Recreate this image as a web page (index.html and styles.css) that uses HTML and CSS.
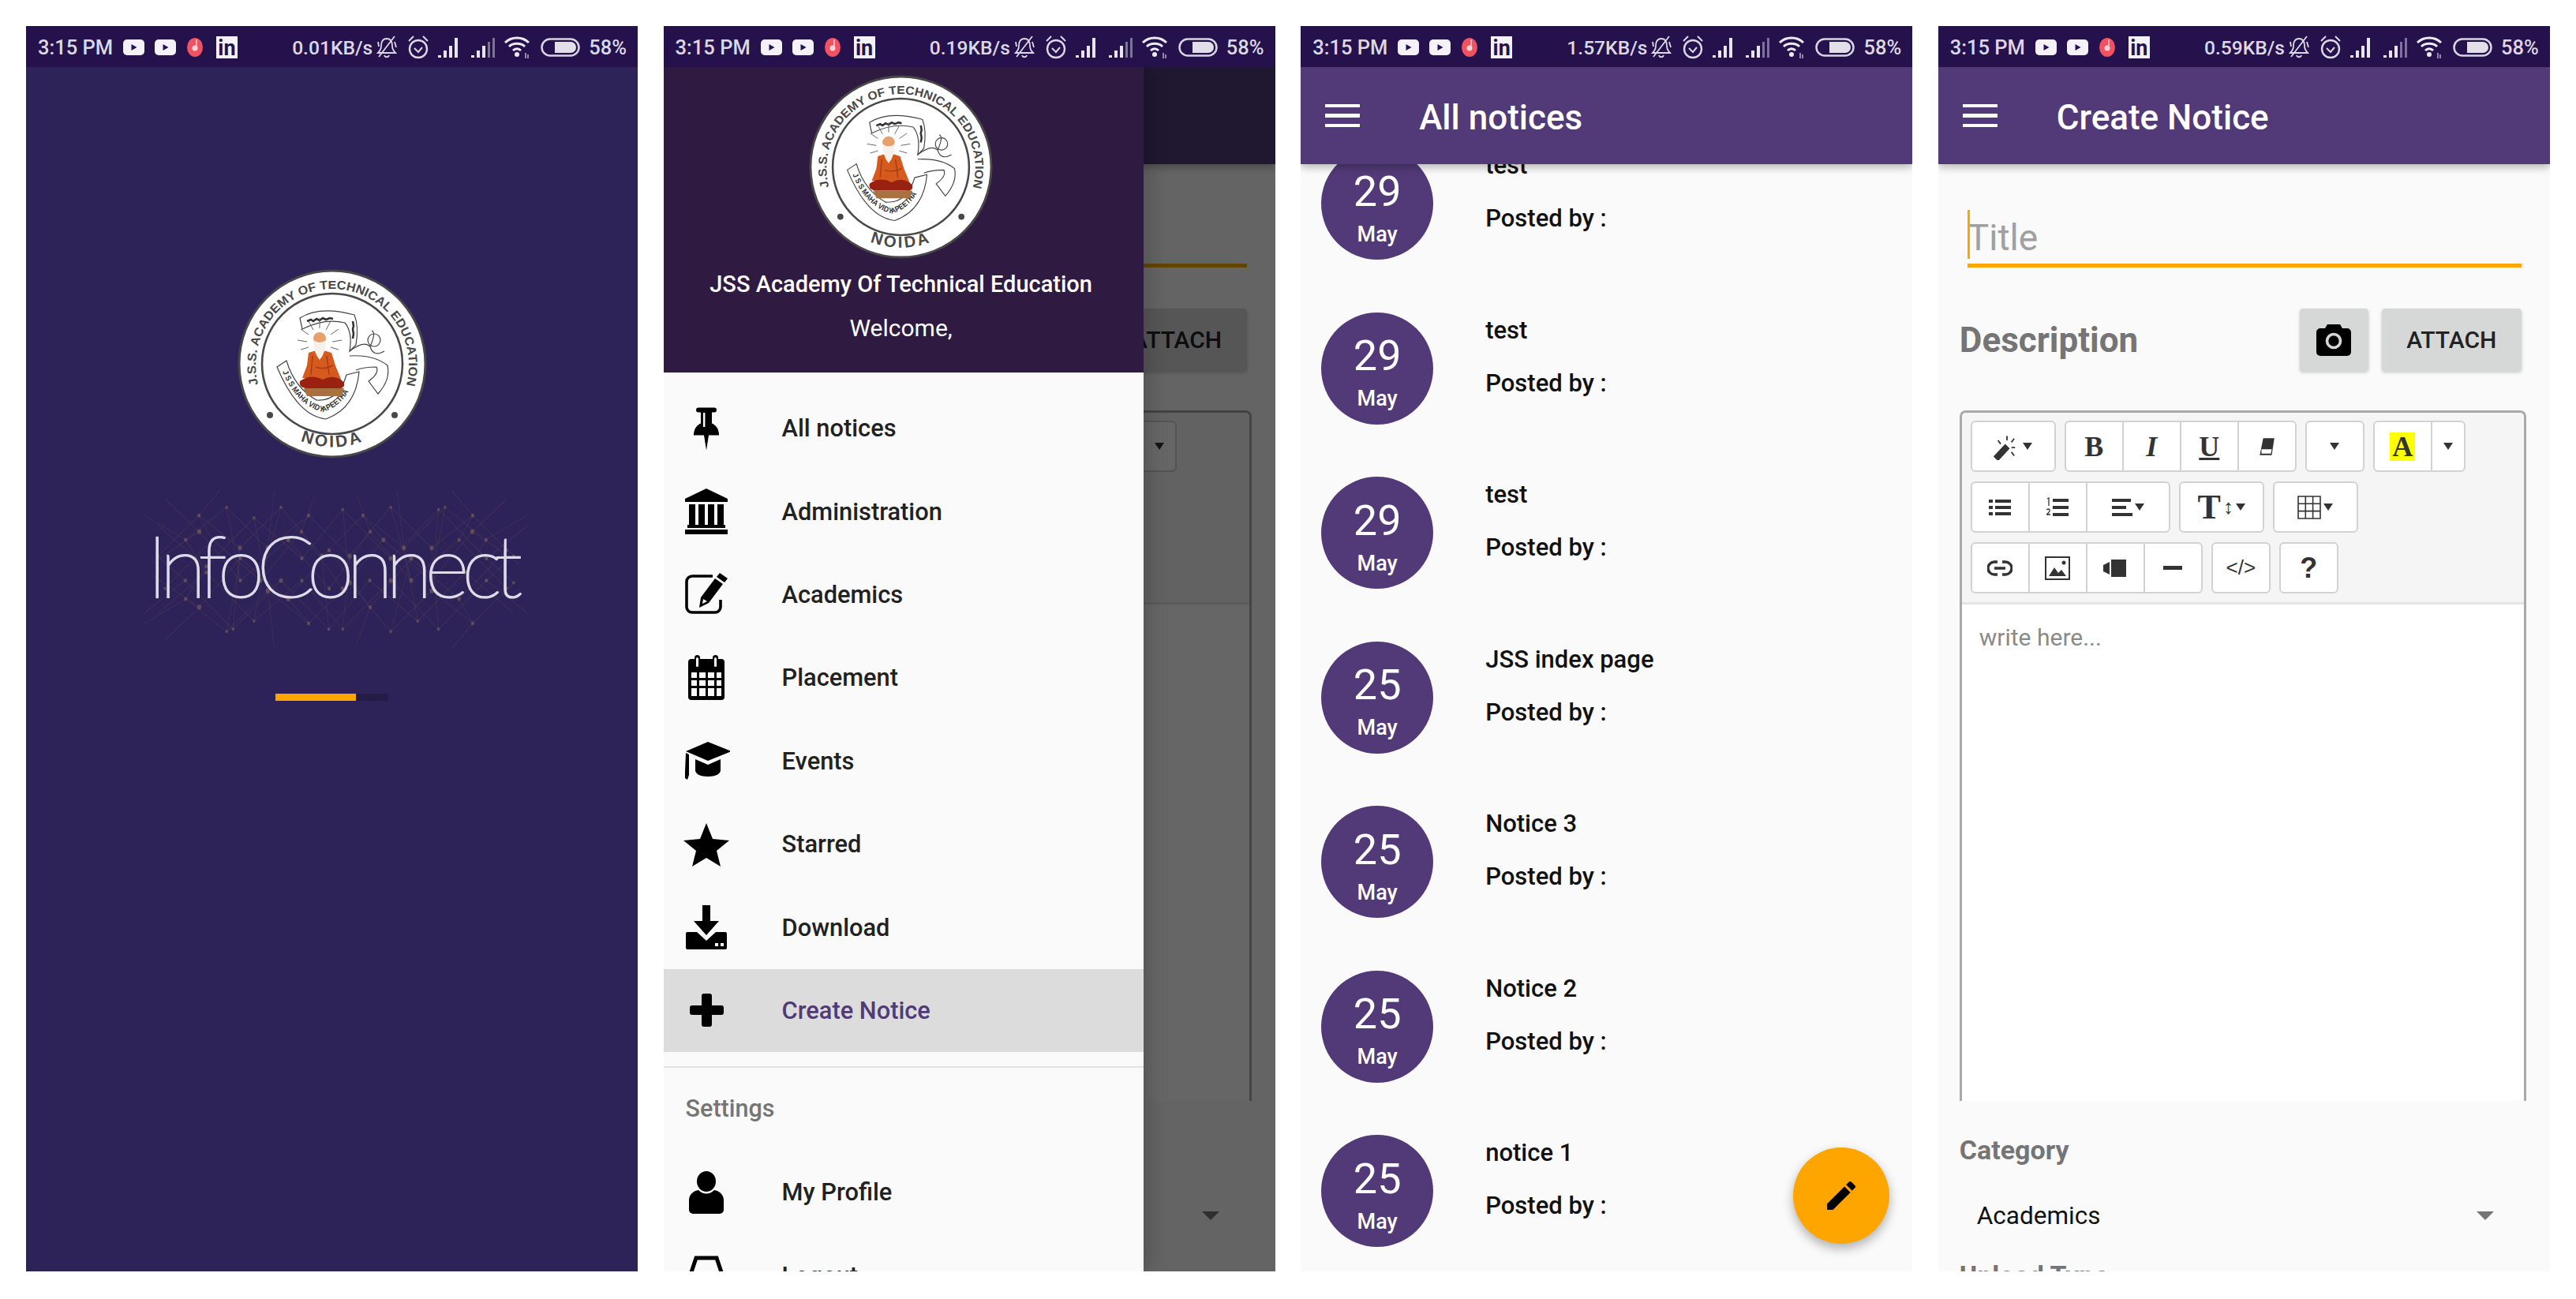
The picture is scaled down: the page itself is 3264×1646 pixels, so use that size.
FILE: index.html
```html
<!DOCTYPE html>
<html lang="en">
<head>
    <meta charset="UTF-8">
    <title>InfoConnect</title>
    <link rel="stylesheet" href="styles.css">
</head>
<body>
    <!-- shared icons -->
    <svg class="defs" width="0" height="0">
        <defs>
            <symbol id="yt" viewBox="0 0 27 20"><rect width="27" height="20" rx="5" fill="#f4f2f8"/><path d="M10.5 6l7 4-7 4z" fill="#25124d"/></symbol>
            <symbol id="music" viewBox="0 0 20 24"><ellipse cx="10" cy="12" rx="10" ry="12" fill="#ef5361"/><circle cx="10" cy="13" r="3.5" fill="#f7d4d8"/><path d="M12 2v10" stroke="#f7d4d8" stroke-width="1.5"/></symbol>
            <symbol id="bell" viewBox="0 0 28 30"><path d="M14 4c-5 0-7 4-7 9 0 5-2 7-4 9h22c-2-2-4-4-4-9 0-5-2-9-7-9zM11 25c1 3 5 3 6 0M4 27L24 1M24 8l2 7M3 8l1 6" fill="none" stroke="#dcd8e6" stroke-width="1.8"/></symbol>
            <symbol id="alarm" viewBox="0 0 28 32"><circle cx="14" cy="18" r="11" fill="none" stroke="#dcd8e6" stroke-width="2.4"/><path d="M9 17l5 5 5-6M2 8l6-6M26 8l-6-6" fill="none" stroke="#dcd8e6" stroke-width="2"/></symbol>
            <symbol id="sig" viewBox="0 0 32 26"><path d="M1 23h4v3H1zM8 17h4v9H8zM15 11h4v15h-4zM22 1h4v25h-4z" fill="#e8e5ee"/></symbol>
            <symbol id="sig2" viewBox="0 0 32 26"><path d="M1 23h4v3H1zM8 17h4v9H8zM15 11h4v15h-4z" fill="#e8e5ee"/><path d="M22 6h3v20h-3zM28 1h3v25h-3z" fill="#7d7298"/></symbol>
            <symbol id="wifi" viewBox="0 0 34 30"><path d="M2 9c8-8 22-8 30 0M7 14c5-5 15-5 20 0M12 19c3-3 7-3 10 0" fill="none" stroke="#eceaf2" stroke-width="3"/><circle cx="17" cy="24" r="3" fill="#eceaf2"/><path d="M28 22v7M31 24v5" stroke="#b5aec8" stroke-width="1.5"/></symbol>
            <symbol id="batt" viewBox="0 0 50 24"><rect x="1.5" y="1.5" width="47" height="21" rx="10.5" fill="none" stroke="#d8d4e2" stroke-width="2.5"/><path d="M18 5h20a7 7 0 0 1 0 14H18z" fill="#e2dfea"/></symbol>

            <symbol id="logo" viewBox="0 0 240 240">
                <circle cx="120" cy="120" r="118" fill="#fff" stroke="#484848" stroke-width="3"/>
                <circle cx="120" cy="120" r="89" fill="none" stroke="#484848" stroke-width="2.6"/>
                <path id="logoTop" d="M26 146A97 97 0 1 1 214 146" fill="none"/>
                <path id="logoBot" d="M50 199A106 106 0 0 0 190 199" fill="none"/>
                <path id="logoBan" d="M57 130Q74 172 108 181Q138 172 149 136" fill="none"/>
                <text class="logo-ring"><textPath href="#logoTop" textLength="354" lengthAdjust="spacingAndGlyphs">J.S.S. ACADEMY OF TECHNICAL EDUCATION</textPath></text>
                <text class="logo-noida" text-anchor="middle"><textPath href="#logoBot" startOffset="50%">NOIDA</textPath></text>
                <circle cx="41" cy="185" r="4" fill="#484848"/>
                <circle cx="199" cy="185" r="4" fill="#484848"/>
                <path d="M79 62Q104 46 148 58Q154 72 150 96L142 104Q146 80 136 68Q110 62 82 76z" fill="#fff" stroke="#444" stroke-width="1.2"/>
                <path d="M88 66l5-2 3 2 4-3 4 2 4-3 4 2 5-2 4 1" fill="none" stroke="#333" stroke-width="2.6"/>
                <path d="M146 66l1 6-1 4 1 6-1 6" fill="none" stroke="#333" stroke-width="2.6"/>
                <path d="M142 104Q160 90 168 98Q172 112 186 104M168 98Q176 80 170 78M142 110Q172 108 190 122Q194 140 178 158L166 142Q180 132 176 124Q160 124 150 128" fill="none" stroke="#444" stroke-width="1.2"/>
                <circle cx="173" cy="90" r="8" fill="none" stroke="#444" stroke-width="1.2"/>
                <path d="M104 62v13M90 66l6 11M118 66l-6 11M80 76l10 7M128 76l-10 7M76 90l12 2M132 90l-12 2M80 102l10-3M128 102l-10-3" stroke="#666" stroke-width="1"/>
                <path d="M50 124L62 116Q72 150 100 166Q128 168 138 134L154 130Q150 176 112 190Q76 186 50 124z" fill="#fff" stroke="#444" stroke-width="1.2"/>
                <text class="logo-band"><textPath href="#logoBan" textLength="118" lengthAdjust="spacingAndGlyphs">J S S MAHA VIDYAPEETHA</textPath></text>
                <path d="M90 106Q104 100 119 106L124 122 132 142 82 138 88 122z" fill="#d65a1e"/>
                <path d="M95 110l-2 24M113 110l3 24M99 124q10 4 22-2" fill="none" stroke="#a33c10" stroke-width="1.4"/>
                <path d="M79 142Q92 132 108 140Q124 132 135 144Q137 152 126 151L92 151Q77 152 79 142z" fill="#98210f"/>
                <path d="M84 151h51l-3 10H88z" fill="#a8713f"/>
                <circle cx="104" cy="88" r="8" fill="#e8a06b"/>
                <path d="M96 90Q104 96 112 90Q112 106 104 115Q96 106 96 90z" fill="#f6f1ea"/>
            </symbol>

            <symbol id="i-pin" viewBox="0 0 60 60"><path d="M20 3.5h20a2.5 2.5 0 0 1 0 6h-3v14c5 2 8 6 9 13v2H33l-3 19-3-19H14v-2c1-7 4-11 9-13v-14h-3a2.5 2.5 0 0 1 0-6z"/><rect x="26" y="10" width="2.4" height="18" fill="#fafafa"/></symbol>
            <symbol id="i-bank" viewBox="0 0 60 60"><path d="M30 1l27 13v4H3v-4zM8 21h8v26H8zM20 21h8v26h-8zM32 21h8v26h-8zM44 21h8v26h-8zM6 47h48v4H6zM3 53h54v6H3z"/></symbol>
            <symbol id="i-edit" viewBox="0 0 60 60"><path d="M38 7H12a7 7 0 0 0-7 7v32a7 7 0 0 0 7 7h29a7 7 0 0 0 7-7v-9" fill="none" stroke="#000" stroke-width="3.6"/><path d="M47 3l10 7-4 5-10-7zM41 10l10 7-18 24-12 6 2-13z"/><path d="M26 36l5 3-6 3z" fill="#fafafa"/></symbol>
            <symbol id="i-cal" viewBox="0 0 60 60"><rect x="7" y="6" width="46" height="52" rx="4"/><path d="M11 23h7v7h-7zM21 23h8v7h-8zM32 23h8v7h-8zM43 23h6v7h-6zM11 33h7v7h-7zM21 33h8v7h-8zM32 33h8v7h-8zM43 33h6v7h-6zM11 43h7v10h-7zM21 43h8v10h-8zM32 43h8v10h-8zM43 43h6v10h-6z" fill="#fafafa"/><rect x="15" y="1" width="7" height="17" rx="3.5"/><rect x="38" y="1" width="7" height="17" rx="3.5"/><rect x="17" y="4" width="3" height="12" rx="1.5" fill="#fafafa"/><rect x="40" y="4" width="3" height="12" rx="1.5" fill="#fafafa"/></symbol>
            <symbol id="i-cap" viewBox="0 0 60 60"><path d="M32 6L62 18 32 30 4 18zM16 28l16 7 16-7v14c0 5-7 8-16 8s-16-3-16-8zM4 20l4 2v26l-2 6-3-2v-8z"/></symbol>
            <symbol id="i-star" viewBox="0 0 60 60"><path d="M30 3l8 20 21 2-16 13 5 20-18-11-18 11 5-20L1 25l21-2z"/></symbol>
            <symbol id="i-down" viewBox="0 0 60 60"><path d="M25 2h10v20h11L30 40 14 22h11zM6 36h12l12 11 12-11h12a2 2 0 0 1 2 2v18a2 2 0 0 1-2 2H6a2 2 0 0 1-2-2V38a2 2 0 0 1 2-2z"/><path d="M41 50h4v4h-4zM48 50h4v4h-4z" fill="#fafafa"/></symbol>
            <symbol id="i-plus" viewBox="0 0 60 60"><rect x="24" y="9" width="13" height="42" rx="3"/><rect x="9" y="24" width="43" height="12" rx="3"/></symbol>
            <symbol id="i-user" viewBox="0 0 60 60"><ellipse cx="30" cy="16" rx="12" ry="13"/><path d="M20 27c6 6 14 6 20 0 6 1 12 5 12 13v12a5 5 0 0 1-5 5H13a5 5 0 0 1-5-5V40c0-8 6-12 12-13z"/></symbol>
            <symbol id="i-out" viewBox="0 0 60 60"><path d="M9 32L17 8h26l8 24" fill="none" stroke="#000" stroke-width="5"/><path d="M6 34h48v22H6z"/></symbol>
            <symbol id="i-cam" viewBox="0 0 44 40"><path d="M14 0h16l3 5h6a5 5 0 0 1 5 5v25a5 5 0 0 1-5 5H5a5 5 0 0 1-5-5V10a5 5 0 0 1 5-5h6z"/><circle cx="22" cy="21" r="8.5" fill="none" stroke="#d6d7d7" stroke-width="3.6"/></symbol>

            <symbol id="t-wand" viewBox="0 0 30 30"><path d="M1 26l12-13 4 4L5 30zM15 3v5M5 8l3 4M23 6l-3 4M20 16h4M20 21l3 4" fill="#333" stroke="#333" stroke-width="1.6"/></symbol>
            <symbol id="t-erase" viewBox="0 0 24 24"><path d="M8 2h13l-3 20H4z" fill="#333"/><path d="M6 15h12l-1 5H6z" fill="#fff"/></symbol>
            <symbol id="t-ul" viewBox="0 0 28 24"><path d="M0 2h5v4H0zM8 2h20v4H8zM0 10h5v4H0zM8 10h20v4H8zM0 18h5v4H0zM8 18h20v4H8z" fill="#333"/></symbol>
            <symbol id="t-ol" viewBox="0 0 28 26"><path d="M8 2h20v4H8zM8 11h20v4H8zM8 20h20v4H8z" fill="#333"/><path d="M1 2l2-1v10M0 16q3-2 4 0t-4 6h5" fill="none" stroke="#333" stroke-width="1.3"/></symbol>
            <symbol id="t-align" viewBox="0 0 26 24"><path d="M0 1h24v4H0zM0 10h18v4H0zM0 19h26v4H0z" fill="#333"/></symbol>
            <symbol id="t-table" viewBox="0 0 30 30"><path d="M1 1h28v28H1zM1 10.300h28M1 19.600h28M10.300 1v28M19.600 1v28" fill="none" stroke="#333" stroke-width="1.6"/></symbol>
            <symbol id="t-link" viewBox="0 0 32 24"><path d="M13 4H9a8 8 0 0 0 0 16h4M19 4h4a8 8 0 0 1 0 16h-4M9 12h14" fill="none" stroke="#333" stroke-width="3.4"/></symbol>
            <symbol id="t-pic" viewBox="0 0 32 30"><path d="M1 1h30v28H1z" fill="none" stroke="#333" stroke-width="2"/><path d="M5 25l7-11 5 7 4-4 6 8z" fill="#333"/><circle cx="24" cy="8" r="2.500" fill="#333"/></symbol>
            <symbol id="t-video" viewBox="0 0 30 24"><path d="M10 1h19v22H10zM0 8l8-4v16l-8-4z" fill="#333"/></symbol>
        </defs>
    </svg>

    <!-- splash -->
    <section class="phone phone-splash">
        <div class="status">
            <span class="clock">3:15 PM</span>
            <svg class="st-yt"><use href="#yt"/></svg>
            <svg class="st-yt"><use href="#yt"/></svg>
            <svg class="st-music"><use href="#music"/></svg>
            <span class="st-in">in</span>
            <span class="speed">0.01KB/s</span>
            <svg class="st-bell"><use href="#bell"/></svg>
            <svg class="st-alarm"><use href="#alarm"/></svg>
            <svg class="st-sig"><use href="#sig"/></svg>
            <svg class="st-sig"><use href="#sig2"/></svg>
            <svg class="st-wifi"><use href="#wifi"/></svg>
            <svg class="st-batt"><use href="#batt"/></svg>
            <span class="percent">58%</span>
        </div>
        <div class="splash">
            <svg class="splash-logo"><use href="#logo"/></svg>
            <svg class="wordmark" viewBox="0 0 775 260">
                <defs>
                    <g id="webNet">
                        <path class="web" d="M110 70L170 100 230 60 290 110 350 70 410 120 470 60 530 110 590 70 650 120M120 130L190 90 250 150 320 100 380 160 440 90 500 150 570 100 640 160M130 190L200 140 270 200 340 150 400 210 470 150 540 210 610 150 670 190M170 100L200 140M230 60L250 150M290 110L270 200M350 70L320 100M410 120L400 210M470 60L500 150M530 110L540 210M590 70L570 100M650 120L610 150M140 50L190 90M300 40L290 110M420 45L440 90M560 40L590 70"/>
                        <g class="web-dots">
                            <circle cx="170" cy="100" r="2.500"/><circle cx="230" cy="60" r="2"/><circle cx="290" cy="110" r="3"/><circle cx="350" cy="70" r="2.500"/><circle cx="410" cy="120" r="3"/><circle cx="470" cy="60" r="2"/><circle cx="530" cy="110" r="3"/><circle cx="590" cy="70" r="2.500"/><circle cx="650" cy="120" r="2"/><circle cx="190" cy="90" r="3"/><circle cx="250" cy="150" r="2.500"/><circle cx="320" cy="100" r="3"/><circle cx="380" cy="160" r="2.500"/><circle cx="440" cy="90" r="2.500"/><circle cx="500" cy="150" r="3"/><circle cx="570" cy="100" r="2.500"/><circle cx="640" cy="160" r="2"/><circle cx="200" cy="140" r="2.500"/><circle cx="270" cy="200" r="2"/><circle cx="340" cy="150" r="2.500"/><circle cx="400" cy="210" r="2"/><circle cx="470" cy="150" r="3"/><circle cx="540" cy="210" r="2"/><circle cx="610" cy="150" r="2.500"/>
                        </g>
                    </g>
                </defs>
                <use href="#webNet" transform="translate(55 -19) scale(.866 1.03)"/>
                <use href="#webNet" transform="translate(730 -19) scale(-.866 1.03)"/>
                <use href="#webNet" transform="translate(55 262) scale(.866 -1.03)"/>
                <text class="wordmark-text" x="153" y="157" textLength="476" lengthAdjust="spacing">InfoConnect</text>
            </svg>
            <div class="progress"><div class="progress-fill"></div></div>
        </div>
    </section>

    <!-- drawer open over create notice -->
    <section class="phone">
        <div class="status">
            <span class="clock">3:15 PM</span>
            <svg class="st-yt"><use href="#yt"/></svg>
            <svg class="st-yt"><use href="#yt"/></svg>
            <svg class="st-music"><use href="#music"/></svg>
            <span class="st-in">in</span>
            <span class="speed">0.19KB/s</span>
            <svg class="st-bell"><use href="#bell"/></svg>
            <svg class="st-alarm"><use href="#alarm"/></svg>
            <svg class="st-sig"><use href="#sig"/></svg>
            <svg class="st-sig"><use href="#sig2"/></svg>
            <svg class="st-wifi"><use href="#wifi"/></svg>
            <svg class="st-batt"><use href="#batt"/></svg>
            <span class="percent">58%</span>
        </div>
        <div class="appbar"></div>
        <div class="form">
            <div class="title-field"></div>
            <div class="form-actions">
                <button class="btn btn-attach">ATTACH</button>
            </div>
            <div class="editor">
                <div class="toolbar">
                    <div class="tb-row tb-row-end">
                        <div class="tb-group"><span class="tb-btn"></span><span class="tb-btn tb-narrow"><i class="caret"></i></span></div>
                    </div>
                </div>
            </div>
            <div class="select-row select-row-under"><i class="select-caret"></i></div>
        </div>
        <div class="scrim"></div>
        <aside class="drawer">
            <div class="drawer-head">
                <svg class="drawer-logo"><use href="#logo"/></svg>
                <p class="drawer-name">JSS Academy Of Technical Education</p>
                <p class="drawer-welcome">Welcome,</p>
            </div>
            <nav class="menu">
                <a class="menu-item"><svg class="menu-icon"><use href="#i-pin"/></svg>All notices</a>
                <a class="menu-item"><svg class="menu-icon"><use href="#i-bank"/></svg>Administration</a>
                <a class="menu-item"><svg class="menu-icon"><use href="#i-edit"/></svg>Academics</a>
                <a class="menu-item"><svg class="menu-icon"><use href="#i-cal"/></svg>Placement</a>
                <a class="menu-item"><svg class="menu-icon"><use href="#i-cap"/></svg>Events</a>
                <a class="menu-item"><svg class="menu-icon"><use href="#i-star"/></svg>Starred</a>
                <a class="menu-item"><svg class="menu-icon"><use href="#i-down"/></svg>Download</a>
                <a class="menu-item active"><svg class="menu-icon"><use href="#i-plus"/></svg>Create Notice</a>
            </nav>
            <div class="menu-divider"></div>
            <p class="menu-label">Settings</p>
            <a class="menu-item"><svg class="menu-icon"><use href="#i-user"/></svg>My Profile</a>
            <a class="menu-item"><svg class="menu-icon"><use href="#i-out"/></svg>Logout</a>
        </aside>
    </section>

    <!-- all notices -->
    <section class="phone">
        <div class="status">
            <span class="clock">3:15 PM</span>
            <svg class="st-yt"><use href="#yt"/></svg>
            <svg class="st-yt"><use href="#yt"/></svg>
            <svg class="st-music"><use href="#music"/></svg>
            <span class="st-in">in</span>
            <span class="speed">1.57KB/s</span>
            <svg class="st-bell"><use href="#bell"/></svg>
            <svg class="st-alarm"><use href="#alarm"/></svg>
            <svg class="st-sig"><use href="#sig"/></svg>
            <svg class="st-sig"><use href="#sig2"/></svg>
            <svg class="st-wifi"><use href="#wifi"/></svg>
            <svg class="st-batt"><use href="#batt"/></svg>
            <span class="percent">58%</span>
        </div>
        <div class="appbar">
            <span class="burger"><i></i><i></i><i></i></span>
            <h1 class="appbar-title">All notices</h1>
        </div>
        <div class="notices">
            <div class="notice">
                <div class="date"><span class="date-day">29</span><span class="date-month">May</span></div>
                <div class="notice-text"><p>test</p><p class="posted">Posted by :</p></div>
            </div>
            <div class="notice">
                <div class="date"><span class="date-day">29</span><span class="date-month">May</span></div>
                <div class="notice-text"><p>test</p><p class="posted">Posted by :</p></div>
            </div>
            <div class="notice">
                <div class="date"><span class="date-day">29</span><span class="date-month">May</span></div>
                <div class="notice-text"><p>test</p><p class="posted">Posted by :</p></div>
            </div>
            <div class="notice">
                <div class="date"><span class="date-day">25</span><span class="date-month">May</span></div>
                <div class="notice-text"><p>JSS index page</p><p class="posted">Posted by :</p></div>
            </div>
            <div class="notice">
                <div class="date"><span class="date-day">25</span><span class="date-month">May</span></div>
                <div class="notice-text"><p>Notice 3</p><p class="posted">Posted by :</p></div>
            </div>
            <div class="notice">
                <div class="date"><span class="date-day">25</span><span class="date-month">May</span></div>
                <div class="notice-text"><p>Notice 2</p><p class="posted">Posted by :</p></div>
            </div>
            <div class="notice">
                <div class="date"><span class="date-day">25</span><span class="date-month">May</span></div>
                <div class="notice-text"><p>notice 1</p><p class="posted">Posted by :</p></div>
            </div>
        </div>
        <button class="fab">
            <svg viewBox="0 0 24 24" width="48" height="48"><path d="M3 17.250V21h3.750L17.810 9.940l-3.750-3.750L3 17.250zM20.710 7.040a1 1 0 0 0 0-1.410l-2.340-2.340a1 1 0 0 0-1.410 0l-1.830 1.830 3.750 3.750 1.830-1.830z"/></svg>
        </button>
    </section>

    <!-- create notice -->
    <section class="phone">
        <div class="status">
            <span class="clock">3:15 PM</span>
            <svg class="st-yt"><use href="#yt"/></svg>
            <svg class="st-yt"><use href="#yt"/></svg>
            <svg class="st-music"><use href="#music"/></svg>
            <span class="st-in">in</span>
            <span class="speed">0.59KB/s</span>
            <svg class="st-bell"><use href="#bell"/></svg>
            <svg class="st-alarm"><use href="#alarm"/></svg>
            <svg class="st-sig"><use href="#sig"/></svg>
            <svg class="st-sig"><use href="#sig2"/></svg>
            <svg class="st-wifi"><use href="#wifi"/></svg>
            <svg class="st-batt"><use href="#batt"/></svg>
            <span class="percent">58%</span>
        </div>
        <div class="appbar">
            <span class="burger"><i></i><i></i><i></i></span>
            <h1 class="appbar-title">Create Notice</h1>
        </div>
        <div class="form">
            <div class="title-field"><span class="title-hint">Title</span></div>
            <div class="form-actions">
                <h2 class="form-label">Description</h2>
                <button class="btn btn-cam"><svg width="44" height="40"><use href="#i-cam"/></svg></button>
                <button class="btn btn-attach">ATTACH</button>
            </div>
            <div class="editor">
                <div class="toolbar">
                    <div class="tb-row">
                        <div class="tb-group"><span class="tb-btn tb-wide"><svg width="34" height="34"><use href="#t-wand"/></svg><i class="caret"></i></span></div>
                        <div class="tb-group">
                            <span class="tb-btn tb-serif tb-bold">B</span>
                            <span class="tb-btn tb-serif tb-italic">I</span>
                            <span class="tb-btn tb-serif tb-under">U</span>
                            <span class="tb-btn"><svg width="26" height="26"><use href="#t-erase"/></svg></span>
                        </div>
                        <div class="tb-group"><span class="tb-btn"><i class="caret"></i></span></div>
                        <div class="tb-group">
                            <span class="tb-btn"><span class="tb-serif tb-bold tb-color">A</span></span>
                            <span class="tb-btn tb-narrow"><i class="caret"></i></span>
                        </div>
                    </div>
                    <div class="tb-row">
                        <div class="tb-group">
                            <span class="tb-btn"><svg width="28" height="24"><use href="#t-ul"/></svg></span>
                            <span class="tb-btn"><svg width="28" height="26"><use href="#t-ol"/></svg></span>
                            <span class="tb-btn tb-wide2"><svg width="26" height="24"><use href="#t-align"/></svg><i class="caret"></i></span>
                        </div>
                        <div class="tb-group"><span class="tb-btn tb-wide"><span class="tb-serif tb-bold tb-size">T</span><span class="tb-updown">↕</span><i class="caret"></i></span></div>
                        <div class="tb-group"><span class="tb-btn tb-wide"><svg width="30" height="30"><use href="#t-table"/></svg><i class="caret"></i></span></div>
                    </div>
                    <div class="tb-row">
                        <div class="tb-group">
                            <span class="tb-btn"><svg width="32" height="24"><use href="#t-link"/></svg></span>
                            <span class="tb-btn"><svg width="32" height="30"><use href="#t-pic"/></svg></span>
                            <span class="tb-btn"><svg width="30" height="24"><use href="#t-video"/></svg></span>
                            <span class="tb-btn"><i class="tb-rule"></i></span>
                        </div>
                        <div class="tb-group"><span class="tb-btn tb-code">&lt;/&gt;</span></div>
                        <div class="tb-group"><span class="tb-btn tb-help">?</span></div>
                    </div>
                </div>
                <div class="editor-body">write here...</div>
            </div>
            <h2 class="form-label form-label-small">Category</h2>
            <div class="select-row"><span>Academics</span><i class="select-caret"></i></div>
            <h2 class="form-label form-label-small form-label-cut">Upload Type</h2>
        </div>
    </section>
</body>
</html>
```

FILE: styles.css
```css
/* Page */
html {
    background: #fff;
}
body {
    display: flex;
    gap: 32.6px;
    width: 3264px;
    height: 1646px;
    margin: 0;
    padding: 33px 32px 35px 33px;
    box-sizing: border-box;
    overflow: hidden;
    font-family: Roboto, "Liberation Sans", sans-serif;
}
p, h1, h2 {
    margin: 0;
}
.defs {
    position: absolute;
}

/* Phone frame */
.phone {
    position: relative;
    width: 775px;
    height: 1578px;
    flex: none;
    overflow: hidden;
    background: #fafafa;
}
.phone-splash {
    background: #2e2358;
}

/* Status bar */
.status {
    position: relative;
    z-index: 5;
    display: flex;
    align-items: center;
    height: 52px;
    padding: 2px 14px 0 15px;
    box-sizing: border-box;
    background: #25124d;
    color: #dcd8e6;
    font-size: 25.5px;
    font-weight: 500;
    white-space: nowrap;
}
.clock {
    width: 96px;
}
.st-yt {
    width: 27px;
    height: 20px;
    margin-left: 12px;
}
.st-yt + .st-yt {
    margin-left: 13px;
}
.st-music {
    width: 20px;
    height: 24px;
    margin-left: 14px;
}
.st-in {
    width: 27px;
    height: 28px;
    margin-left: 17px;
    background: #f4f2f8;
    color: #25124d;
    font-size: 27px;
    font-weight: 700;
    line-height: 30px;
    text-align: center;
}
.speed {
    margin-left: auto;
    font-size: 24.6px;
}
.st-bell {
    width: 28px;
    height: 30px;
    margin-left: 4px;
}
.st-alarm {
    width: 28px;
    height: 32px;
    margin-left: 12px;
}
.st-sig {
    width: 32px;
    height: 26px;
    margin-left: 10px;
}
.st-wifi {
    width: 34px;
    height: 30px;
    margin-left: 10px;
}
.st-batt {
    width: 50px;
    height: 24px;
    margin-left: 13px;
}
.percent {
    margin-left: 11px;
}

/* App bar */
.appbar {
    position: relative;
    z-index: 2;
    display: flex;
    align-items: center;
    height: 123px;
    background: #523a78;
    box-shadow: 0 4px 10px rgba(0, 0, 0, 0.28);
    color: #fff;
}
.burger {
    display: flex;
    flex-direction: column;
    gap: 8px;
    width: 44px;
    margin-left: 31px;
}
.burger i {
    height: 4.5px;
    background: #fff;
}
.appbar-title {
    margin-left: 75px;
    padding-top: 4px;
    font-size: 44px;
    font-weight: 500;
}

/* Splash */
.splash {
    display: flex;
    flex-direction: column;
    align-items: center;
}
.splash-logo {
    width: 240px;
    height: 240px;
    margin-top: 256px;
}
.wordmark {
    display: block;
    width: 775px;
    height: 260px;
    margin-top: 19px;
}
.web {
    fill: none;
    stroke: #b48d5e;
    stroke-width: 1;
    opacity: 0.12;
}
.web-dots circle {
    fill: #c79a62;
    opacity: 0.3;
}
.wordmark-text {
    fill: #dedcea;
    font-family: Lato, sans-serif;
    font-size: 108px;
    font-weight: 100;
    stroke: #dedcea;
    stroke-width: 2.2;
}
.progress {
    width: 143px;
    height: 9px;
    margin-top: 19px;
    background: #251c45;
}
.progress-fill {
    width: 102px;
    height: 100%;
    background: #ffa500;
}

/* Logo lettering */
.logo-ring {
    fill: #484848;
    font-family: "Liberation Sans", sans-serif;
    font-size: 15.5px;
    font-weight: 700;
}
.logo-noida {
    fill: #484848;
    font-family: "Liberation Sans", sans-serif;
    font-size: 21px;
    font-weight: 700;
    letter-spacing: 3px;
}
.logo-band {
    fill: #333;
    font-family: "Liberation Sans", sans-serif;
    font-size: 10px;
    font-weight: 700;
}

/* Drawer */
.scrim {
    position: absolute;
    inset: 52px 0 0;
    z-index: 3;
    background: rgba(0, 0, 0, 0.6);
}
.drawer {
    position: absolute;
    top: 52px;
    bottom: 0;
    left: 0;
    z-index: 4;
    width: 608px;
    overflow: hidden;
    background: #fafafa;
    box-shadow: 6px 0 24px rgba(0, 0, 0, 0.18);
}
.drawer-head {
    display: flex;
    flex-direction: column;
    align-items: center;
    height: 387px;
    padding: 10px 6px 0 0;
    box-sizing: border-box;
    background: #2f1a42;
    color: #fff;
    font-size: 29px;
    line-height: 40px;
}
.drawer-logo {
    width: 233px;
    height: 233px;
    flex: none;
}
.drawer-name {
    margin-top: 12px;
    font-weight: 500;
}
.drawer-welcome {
    margin-top: 16px;
    font-size: 30px;
}
.menu {
    padding-top: 18px;
}
.menu-item {
    display: flex;
    align-items: center;
    height: 105.4px;
    color: #212121;
    font-size: 30.8px;
    font-weight: 500;
}
.menu-icon {
    width: 60px;
    height: 60px;
    margin: 0 66px 0 24px;
    flex: none;
}
.menu-item.active {
    background: #dcdcdc;
    color: #523a78;
}
.menu-divider {
    height: 2px;
    margin-top: 18px;
    background: #e2e2e2;
}
.menu-label {
    margin: 32px 0 33px 28px;
    color: #757575;
    font-size: 30.5px;
    font-weight: 500;
    line-height: 40px;
}

/* Notices */
.notices {
    margin-top: -54px;
}
.notice {
    display: flex;
    align-items: flex-start;
    gap: 66px;
    height: 208.5px;
    padding-left: 26px;
}
.date {
    display: flex;
    flex-direction: column;
    align-items: center;
    justify-content: center;
    width: 142px;
    height: 142px;
    margin-top: 33px;
    padding-top: 11px;
    box-sizing: border-box;
    flex: none;
    border-radius: 50%;
    background: #523a78;
    color: #fff;
}
.date-day {
    font-size: 54px;
    line-height: 60px;
}
.date-month {
    margin-top: 6px;
    font-size: 27px;
    font-weight: 500;
    line-height: 36px;
}
.notice-text {
    padding-top: 36px;
    color: #111;
    font-size: 31px;
    font-weight: 500;
    line-height: 40px;
}
.posted {
    margin-top: 27px;
}
.fab {
    position: absolute;
    right: 29px;
    bottom: 35px;
    display: flex;
    align-items: center;
    justify-content: center;
    width: 122px;
    height: 122px;
    padding: 0;
    border: 0;
    border-radius: 50%;
    background: #ffa500;
    box-shadow: 0 6px 14px rgba(0, 0, 0, 0.3);
}

/* Create notice form */
.form {
    padding: 52px 30px 0 27px;
}
.title-field {
    position: relative;
    height: 79px;
    margin: 0 6px 0 10px;
    box-sizing: border-box;
    border-bottom: 5px solid #ffa500;
}
.title-field::before {
    content: "";
    position: absolute;
    top: 6px;
    left: 0;
    width: 3px;
    height: 62px;
    background: #ffa500;
}
.title-hint {
    display: block;
    padding-top: 14px;
    color: #a0a0a0;
    font-size: 46px;
    line-height: 54px;
}
.form-actions {
    display: flex;
    align-items: center;
    justify-content: flex-end;
    gap: 17px;
    height: 79px;
    margin: 52px 6px 0 0;
}
.form-label {
    margin: 0 auto 0 0;
    color: #757575;
    font-size: 44px;
    font-weight: 700;
}
.form-label-small {
    margin-top: 42px;
    font-size: 34px;
    line-height: 40px;
}
.form-label-cut {
    margin-top: 31px;
}
.btn {
    display: flex;
    align-items: center;
    justify-content: center;
    height: 79px;
    padding: 0;
    border: 0;
    border-radius: 4px;
    background: #d6d7d7;
    box-shadow: 0 2px 4px rgba(0, 0, 0, 0.2);
    color: #222;
    font-family: Roboto, sans-serif;
    font-size: 30px;
    font-weight: 500;
}
.btn-cam {
    width: 87px;
}
.btn-attach {
    width: 177px;
}

/* Editor */
.editor {
    height: 875px;
    margin-top: 50px;
    box-sizing: border-box;
    overflow: hidden;
    border: 3px solid #a9a9a9;
    border-bottom: 0;
    border-radius: 8px 8px 0 0;
    background: #fff;
}
.toolbar {
    display: flex;
    flex-direction: column;
    gap: 12px;
    height: 243px;
    padding: 10px 11px;
    box-sizing: border-box;
    border-bottom: 3px solid #e4e4e4;
    background: #f5f5f5;
}
.tb-row {
    display: flex;
    gap: 11px;
}
.tb-row-end {
    justify-content: flex-end;
    padding-right: 81px;
}
.tb-group {
    display: flex;
    border: 2px solid #d2d2d2;
    border-radius: 6px;
    background: #fff;
}
.tb-btn {
    display: flex;
    align-items: center;
    justify-content: center;
    gap: 3px;
    width: 71px;
    height: 61px;
    color: #333;
}
.tb-btn + .tb-btn {
    border-left: 2px solid #d2d2d2;
}
.tb-wide {
    width: 104px;
}
.tb-wide2 {
    width: 103px;
}
.tb-narrow {
    width: 40px;
}
.tb-serif {
    font-family: "Liberation Serif", serif;
    font-size: 36px;
}
.tb-bold {
    font-weight: 700;
}
.tb-italic {
    font-style: italic;
    font-weight: 700;
}
.tb-under {
    text-decoration: underline;
    font-weight: 700;
}
.tb-color {
    padding: 0 3px;
    background: #ff0;
    line-height: 36px;
}
.tb-size {
    font-size: 44px;
}
.tb-updown {
    font-size: 26px;
}
.caret {
    width: 0;
    height: 0;
    border-top: 9px solid #333;
    border-right: 6px solid transparent;
    border-left: 6px solid transparent;
}
.tb-rule {
    width: 24px;
    height: 5px;
    background: #333;
}
.tb-code {
    font-family: "Liberation Sans", sans-serif;
    font-size: 26px;
}
.tb-help {
    font-family: "Liberation Sans", sans-serif;
    font-size: 36px;
    font-weight: 700;
}
.editor-body {
    padding: 22px 22px;
    color: #8a8a8a;
    font-size: 30px;
    line-height: 40px;
}

/* Select */
.select-row {
    display: flex;
    align-items: center;
    justify-content: space-between;
    height: 50px;
    margin-top: 38px;
    padding: 0 41px 0 22px;
    color: #111;
    font-size: 31.5px;
}
.select-row-under {
    justify-content: flex-end;
    margin-top: 120px;
}
.select-caret {
    width: 0;
    height: 0;
    border-top: 11px solid #757575;
    border-right: 11px solid transparent;
    border-left: 11px solid transparent;
}
```
